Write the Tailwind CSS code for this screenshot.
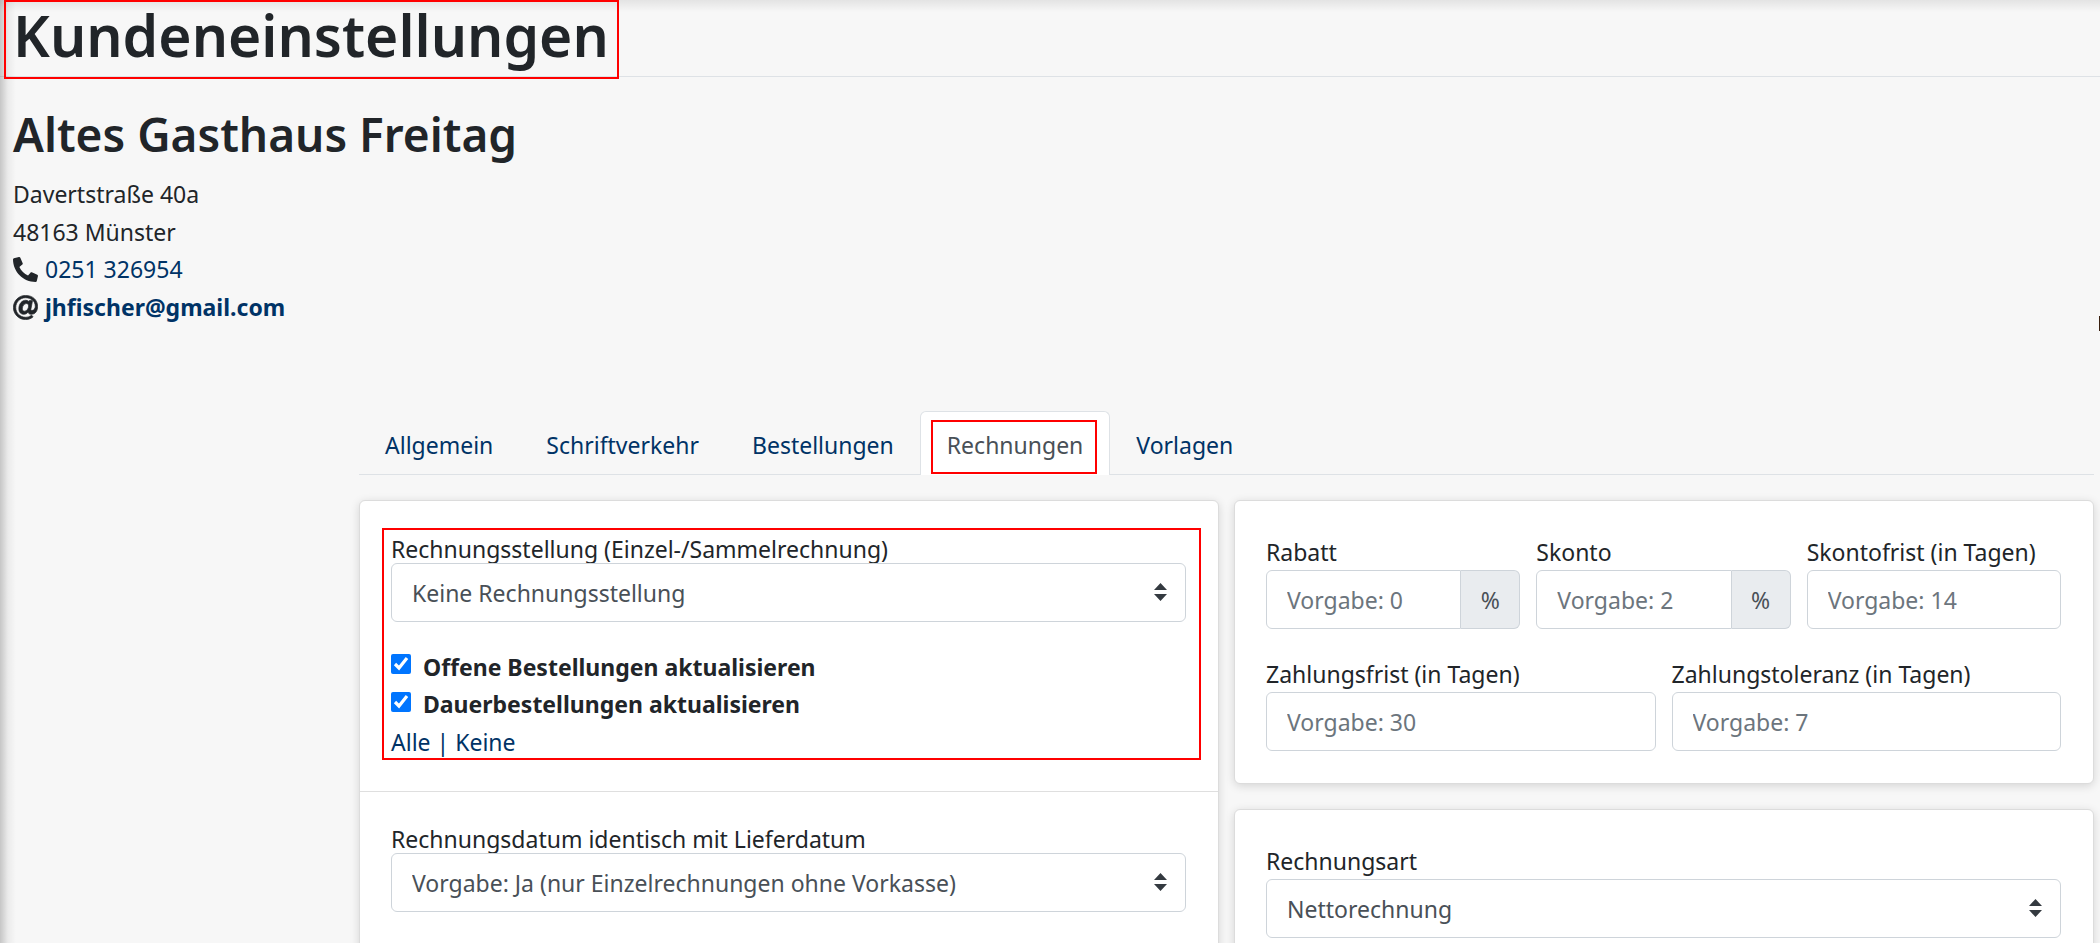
<!DOCTYPE html>
<html lang="de">
<head>
<meta charset="utf-8">
<title>Kundeneinstellungen</title>
<script src="https://cdn.jsdelivr.net/npm/@tailwindcss/browser@4"></script>
</head>
<body class="relative h-screen overflow-hidden bg-[#f7f7f7] font-['Noto_Sans','Open_Sans',sans-serif] text-[23px] leading-[38px] text-[#212529]">
  <!-- shadows cast by the navigation bars -->
  <div class="pointer-events-none absolute inset-y-0 left-0 w-4 bg-gradient-to-r from-black/20 via-black/5 to-transparent"></div>
  <div class="pointer-events-none absolute inset-x-0 top-0 h-3 bg-gradient-to-b from-black/8 to-transparent"></div>
  <div class="absolute right-0 top-[316px] h-[15px] w-px bg-[#3a2010]"></div>

  <header>
    <div class="border-b border-[#dee2e6] px-[13px]">
      <h1 class="relative inline-block pb-1.5 align-top text-[57px] leading-[70px] font-semibold">Kundeneinstellungen
        <span class="pointer-events-none absolute top-0 -right-2.5 -bottom-[3px] -left-[9px] border-2 border-[#ff0000]"></span>
      </h1>
    </div>
    <div class="mt-[27px] px-[13px]">
      <h2 class="text-[46px] leading-[60px] font-semibold">Altes Gasthaus Freitag</h2>
      <address class="mt-[11px] not-italic">
        <div>Davertstraße 40a</div>
        <div>48163 Münster</div>
        <div class="flex items-center gap-[7px] leading-[37px]">
          <svg class="size-[25px]" viewBox="0 0 512 512" fill="currentColor" aria-hidden="true"><path d="M493.4 24.6l-104-24c-11.3-2.6-22.900 3.300-27.500 13.900l-48 112c-4.200 9.800-1.400 21.300 6.900 28l60.600 49.600c-36 76.700-98.900 140.500-177.200 177.200l-49.600-60.600c-6.800-8.300-18.200-11.100-28-6.900l-112 48C3.900 366.500-2 378.100.6 389.400l24 104C27.100 504.200 36.700 512 48 512c256.100 0 464-207.500 464-464 0-11.200-7.700-20.900-18.600-23.400z" transform="matrix(-1 0 0 1 512 0)"/></svg>
          <a href="tel:0251326954" class="text-[#003366]">0251 326954</a>
        </div>
        <div class="flex items-center gap-[7px]">
          <svg class="size-[25px]" viewBox="0 0 512 512" fill="currentColor" stroke="currentColor" stroke-width="14" aria-hidden="true"><path d="M256 8C118.941 8 8 118.919 8 256c0 137.058 110.919 248 248 248 52.925 0 104.680-17.078 147.092-48.319 5.501-4.052 6.423-11.924 2.095-17.211l-15.224-18.597c-4.055-4.954-11.249-5.803-16.428-2.041C339.547 442.517 298.238 456 256 456c-110.280 0-200-89.720-200-200S145.720 56 256 56c108.469 0 200 66.147 200 176 0 41.741-23.196 85.818-69.638 85.818-21.528 0-22.513-14.026-18.309-35.049l30.293-157.440c1.426-7.411-4.249-14.288-11.784-14.288h-44.981a13.518 13.518 0 0 0-13.432 11.993c-.742 6.294-.981 8.140-1.507 14.402-11.923-18.773-35.731-30.163-64.640-30.163C187.500 107.271 120 174.520 120 283.333c0 66.585 36.280 112.726 103.302 112.726 32.240 0 67.343-18.188 88.145-45.917 1.563 24.878 19.144 45.672 61.209 45.672C460.260 395.814 504 324.700 504 232 504 95.007 394.200 8 256 8zm-22.680 323.800c-26.432 0-42.212-18.132-42.212-48.503 0-69.062 46.042-108.034 83.784-108.034 29.038 0 45.130 19.540 45.130 48.440 0 52.500-36.510 108.097-86.702 108.097z"/></svg>
          <a href="mailto:jhfischer@gmail.com" class="font-bold text-[#003366]">jhfischer@gmail.com</a>
        </div>
      </address>
    </div>
  </header>

  <main class="mt-[85px] mr-1.5 ml-[359px]">
    <nav class="flex border-b border-[#dee2e6] text-[#003366]">
      <a href="#allgemein" class="border border-transparent px-[25px] pt-3.5 pb-[9px]">Allgemein</a>
      <a href="#schriftverkehr" class="border border-transparent px-[26px] pt-3.5 pb-[9px]">Schriftverkehr</a>
      <a href="#bestellungen" class="border border-transparent px-[25px] pt-3.5 pb-[9px]">Bestellungen</a>
      <a href="#rechnungen" aria-current="page" class="relative -mb-px rounded-t-md border border-b-0 border-[#dee2e6] bg-white px-[26px] pt-3.5 pb-[11px] text-[#495057]">Rechnungen
        <span class="pointer-events-none absolute top-2 right-3 bottom-px left-2.5 border-2 border-[#ff0000]"></span>
      </a>
      <a href="#vorlagen" class="border border-transparent px-[25px] pt-3.5 pb-[9px]">Vorlagen</a>
    </nav>

    <div class="mt-[25px] grid grid-cols-2 gap-[15px]">
      <form class="rounded-md border border-[#dcdcdc] bg-white shadow-[0_2px_10px_rgba(0,0,0,0.14)]">
        <section class="border-b border-[#dfdfdf] pt-[30px] pr-8 pb-[30px] pl-[31px]">
          <div class="relative">
            <label for="stellung" class="-mb-1 block leading-9">Rechnungsstellung (Einzel-/Sammelrechnung)</label>
            <div class="relative">
              <select id="stellung" class="block h-[59px] w-full appearance-none rounded-md border border-[#ced4da] bg-white pl-5 text-[#495057]"><option>Keine Rechnungsstellung</option></select>
              <svg class="pointer-events-none absolute top-5 right-[19px] h-[18px] w-[13px]" viewBox="0 0 13 18" aria-hidden="true"><path fill="#343a40" d="M0 7 6.500 0 13 7zM0 11h13l-6.500 7z"/></svg>
            </div>
            <div class="mt-[26px] font-bold">
              <div class="flex items-center gap-3">
                <input id="offen" type="checkbox" checked class="mb-1.5 size-5 accent-[#0075ff]">
                <label for="offen">Offene Bestellungen aktualisieren</label>
              </div>
              <div class="flex items-center gap-3 leading-[37px]">
                <input id="dauer" type="checkbox" checked class="mb-1.5 size-5 accent-[#0075ff]">
                <label for="dauer">Dauerbestellungen aktualisieren</label>
              </div>
            </div>
            <div class="text-[#003366]"><a href="#alle">Alle</a> | <a href="#keine">Keine</a></div>
            <span class="pointer-events-none absolute -top-[3px] -right-[15px] bottom-px -left-[9px] border-2 border-[#ff0000]"></span>
          </div>
        </section>
        <section class="pt-[29px] pr-8 pb-10 pl-[31px]">
          <label for="datum" class="-mb-1 block leading-9">Rechnungsdatum identisch mit Lieferdatum</label>
          <div class="relative">
            <select id="datum" class="block h-[59px] w-full appearance-none rounded-md border border-[#ced4da] bg-white pl-5 text-[#495057]"><option>Vorgabe: Ja (nur Einzelrechnungen ohne Vorkasse)</option></select>
            <svg class="pointer-events-none absolute top-5 right-[19px] h-[18px] w-[13px]" viewBox="0 0 13 18" aria-hidden="true"><path fill="#343a40" d="M0 7 6.500 0 13 7zM0 11h13l-6.500 7z"/></svg>
          </div>
        </section>
      </form>

      <div class="flex flex-col gap-[25px]">
        <form class="rounded-md border border-[#dcdcdc] bg-white pt-[33px] pr-8 pb-8 pl-[31px] shadow-[0_2px_10px_rgba(0,0,0,0.14)]">
          <div class="grid grid-cols-3 gap-4">
            <div>
              <label for="rabatt" class="block leading-9">Rabatt</label>
              <div class="flex h-[59px]">
                <input id="rabatt" type="text" placeholder="Vorgabe: 0" class="min-w-0 flex-1 rounded-l-md border border-[#ced4da] bg-white px-5 placeholder:text-[#6c757d]">
                <span class="flex w-[59px] items-center justify-center rounded-r-md border border-l-0 border-[#ced4da] bg-[#e9ecef] text-[#495057]">%</span>
              </div>
            </div>
            <div>
              <label for="skonto" class="block leading-9">Skonto</label>
              <div class="flex h-[59px]">
                <input id="skonto" type="text" placeholder="Vorgabe: 2" class="min-w-0 flex-1 rounded-l-md border border-[#ced4da] bg-white px-5 placeholder:text-[#6c757d]">
                <span class="flex w-[59px] items-center justify-center rounded-r-md border border-l-0 border-[#ced4da] bg-[#e9ecef] text-[#495057]">%</span>
              </div>
            </div>
            <div>
              <label for="skontofrist" class="block leading-9 whitespace-nowrap">Skontofrist (in Tagen)</label>
              <input id="skontofrist" type="text" placeholder="Vorgabe: 14" class="block h-[59px] w-full rounded-md border border-[#ced4da] bg-white px-5 placeholder:text-[#6c757d]">
            </div>
          </div>
          <div class="mt-[27px] grid grid-cols-2 gap-4">
            <div>
              <label for="zahlungsfrist" class="block leading-9">Zahlungsfrist (in Tagen)</label>
              <input id="zahlungsfrist" type="text" placeholder="Vorgabe: 30" class="block h-[59px] w-full rounded-md border border-[#ced4da] bg-white px-5 placeholder:text-[#6c757d]">
            </div>
            <div>
              <label for="toleranz" class="block leading-9">Zahlungstoleranz (in Tagen)</label>
              <input id="toleranz" type="text" placeholder="Vorgabe: 7" class="block h-[59px] w-full rounded-md border border-[#ced4da] bg-white px-5 placeholder:text-[#6c757d]">
            </div>
          </div>
        </form>

        <form class="rounded-md border border-[#dcdcdc] bg-white pt-[33px] pr-8 pb-10 pl-[31px] shadow-[0_2px_10px_rgba(0,0,0,0.14)]">
          <label for="art" class="block leading-9">Rechnungsart</label>
          <div class="relative">
            <select id="art" class="block h-[59px] w-full appearance-none rounded-md border border-[#ced4da] bg-white pl-5 text-[#495057]"><option>Nettorechnung</option></select>
            <svg class="pointer-events-none absolute top-5 right-[19px] h-[18px] w-[13px]" viewBox="0 0 13 18" aria-hidden="true"><path fill="#343a40" d="M0 7 6.500 0 13 7zM0 11h13l-6.500 7z"/></svg>
          </div>
        </form>
      </div>
    </div>
  </main>
</body>
</html>
